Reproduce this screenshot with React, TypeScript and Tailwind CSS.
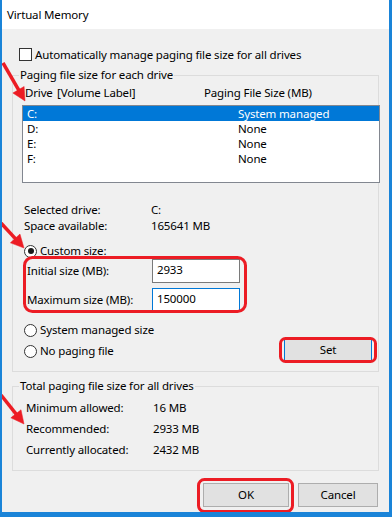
import React from 'react'

const RED = '#ec1c24'

function Radio({ checked, label }: { checked?: boolean; label: string }) {
  return (
    <div className="flex h-[16px] items-center gap-[3px]">
      <span className="flex h-[13px] w-[13px] items-center justify-center rounded-full border border-[#333333] bg-white">
        {checked && <span className="h-[6px] w-[6px] rounded-full bg-[#1a1a1a]" />}
      </span>
      <span>{label}</span>
    </div>
  )
}

function Group({ title, children, className }: { title: string; children: React.ReactNode; className?: string }) {
  return (
    <div className={`relative ml-[10px] w-[367px] border border-[#dcdcdc] ${className ?? ''}`}>
      <span className="absolute -top-[9px] left-[6px] bg-[#f0f0f0] px-[1px] leading-[16px]">{title}</span>
      {children}
    </div>
  )
}

function InfoRow({ label, value, h }: { label: string; value: string; h: string }) {
  return (
    <div className={`flex items-center ${h}`}>
      <span className="w-[127px]">{label}</span>
      <span>{value}</span>
    </div>
  )
}

function Arrow({ x1, y1, x2, y2 }: { x1: number; y1: number; x2: number; y2: number }) {
  const dx = x2 - x1
  const dy = y2 - y1
  const len = Math.hypot(dx, dy)
  const ux = dx / len
  const uy = dy / len
  const head = 13
  const half = 6.5
  const bx = x2 - ux * head
  const by = y2 - uy * head
  const pts = `${x2},${y2} ${bx - uy * half},${by + ux * half} ${bx + uy * half},${by - ux * half}`
  return (
    <g fill={RED} stroke={RED}>
      <line x1={x1} y1={y1} x2={bx + ux * 2} y2={by + uy * 2} strokeWidth={3.5} />
      <polygon points={pts} strokeWidth={0.5} />
    </g>
  )
}

const drives = [
  { drive: 'C:', size: 'System managed' },
  { drive: 'D:', size: 'None' },
  { drive: 'E:', size: 'None' },
  { drive: 'F:', size: 'None' },
]

export default function App() {
  return (
    <div className="relative h-[517px] w-[392px] overflow-hidden border-b-[5px] border-l-2 border-r-[3px] border-[#1a84d8] bg-[#f0f0f0] font-['Noto_Sans',sans-serif] text-[11.5px] leading-[16px] tracking-[-0.15px] text-black">
      <div className="flex h-[29px] items-center bg-white pl-[5px]">Virtual Memory</div>

      <label className="ml-[17px] mt-[19px] flex h-[13px] items-center gap-[3px]">
        <span className="h-[13px] w-[13px] border border-[#333333] bg-white" />
        <span>Automatically manage paging file size for all drives</span>
      </label>

      <Group title="Paging file size for each drive" className="mt-[14px] pb-[10px]">
        <div className="ml-[12px] mt-[9px] flex h-[16px] items-center">
          <span className="w-[32px]">Drive</span>
          <span className="w-[147px]">[Volume Label]</span>
          <span>Paging File Size (MB)</span>
        </div>

        <div className="ml-[9px] mt-[4px] h-[78px] w-[358px] border border-[#828790] bg-white leading-[15px]">
          {drives.map((d, i) => (
            <div
              key={d.drive}
              className={`flex h-[15px] items-center ${i === 0 ? 'bg-[#0078d7] text-white' : ''}`}
            >
              <span className="w-[215px] pl-[4px]">{d.drive}</span>
              <span>{d.size}</span>
            </div>
          ))}
        </div>

        <div className="ml-[11px] mt-[19px]">
          <InfoRow label="Selected drive:" value="C:" h="h-[16px]" />
          <InfoRow label="Space available:" value="165641 MB" h="h-[16px]" />
        </div>

        <div className="ml-[11px] mt-[9px]">
          <Radio checked label="Custom size:" />
        </div>

        <div className="ml-[14px] flex h-[24px] items-center">
          <span className="w-[125px]">Initial size (MB):</span>
          <input
            readOnly
            defaultValue="2933"
            className="h-[24px] w-[88px] border border-[#7a7a7a] bg-white px-[4px] pb-[4px] outline-none"
          />
        </div>
        <div className="ml-[14px] mt-[5px] flex h-[24px] items-center">
          <span className="w-[125px]">Maximum size (MB):</span>
          <input
            readOnly
            defaultValue="150000"
            className="h-[24px] w-[88px] border border-[#0078d7] bg-white px-[4px] pb-[4px] outline-none"
          />
        </div>

        <div className="ml-[11px] mt-[10px]">
          <Radio label="System managed size" />
        </div>
        <div className="ml-[11px] mt-[1px] flex h-[22px] items-start justify-between">
          <div className="mt-[4px]">
            <Radio label="No paging file" />
          </div>
          <button className="mr-[6px] h-[22px] w-[88px] border border-[#0078d7] bg-[#e1e1e1]">Set</button>
        </div>
      </Group>

      <Group title="Total paging file size for all drives" className="mt-[14px] pb-[10px] pt-[10px]">
        <div className="ml-[13px]">
          <InfoRow label="Minimum allowed:" value="16 MB" h="h-[21px]" />
          <InfoRow label="Recommended:" value="2933 MB" h="h-[21px]" />
          <InfoRow label="Currently allocated:" value="2432 MB" h="h-[21px]" />
        </div>
      </Group>

      <div className="mr-[11px] mt-[12px] flex justify-end gap-[9px]">
        <button className="h-[24px] w-[86px] border border-[#adadad] bg-[#e1e1e1]">OK</button>
        <button className="h-[24px] w-[80px] border border-[#adadad] bg-[#e1e1e1]">Cancel</button>
      </div>

      <svg
        className="pointer-events-none absolute -left-[2px] top-0"
        width={392}
        height={517}
        viewBox="0 0 392 517"
        fill="none"
      >
        <rect x={24.5} y={257.5} width={221} height={54} rx={8} stroke={RED} strokeWidth={3} />
        <rect x={280.5} y={338.5} width={95} height={23} rx={5} stroke={RED} strokeWidth={3} />
        <rect x={198.5} y={479.5} width={94} height={32} rx={6} stroke={RED} strokeWidth={3} />
        <Arrow x1={3} y1={63} x2={25} y2={101} />
        <Arrow x1={0} y1={222} x2={24} y2={248} />
        <Arrow x1={1} y1={395} x2={24} y2={424} />
      </svg>
    </div>
  )
}
